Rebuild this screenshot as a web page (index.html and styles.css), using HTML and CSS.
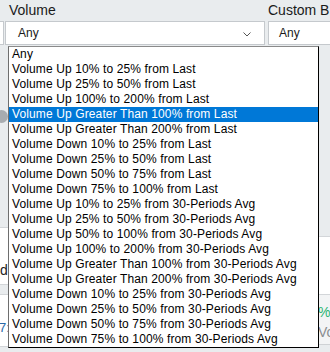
FILE: index.html
```html
<!DOCTYPE html>
<html>
<head>
<meta charset="utf-8">
<link rel="stylesheet" href="styles.css">
</head>
<body>
<div class="page">
  <div class="filters">
    <div class="stub">
      <div class="label">&nbsp;</div>
      <div class="stub-box"></div>
    </div>
    <div class="field vol">
      <div class="label">Volume</div>
      <div class="select">
        <span>Any</span>
        <svg class="chev" width="8" height="5" viewBox="0 0 8 5"><path d="M0.5 0.5 L4 4 L7.5 0.5" fill="none" stroke="#555" stroke-width="1"/></svg>
      </div>
    </div>
    <div class="field custom">
      <div class="label">Custom B</div>
      <div class="select"><span>Any</span></div>
    </div>
  </div>
  <div class="below">
    <div class="left-strip">
      <div class="knob"></div>
      <div class="lcard"><span class="ltext">d</span></div>
      <div class="lrow"><span class="lnum">7:</span></div>
    </div>
    <div class="right-strip">
      <div class="rcard"></div>
      <div class="rrow">
        <span class="pct">%</span>
        <span class="vo">Vo</span>
      </div>
    </div>
  </div>

  <div class="dropdown">
    <div class="opt">Any</div>
    <div class="opt">Volume Up 10% to 25% from Last</div>
    <div class="opt">Volume Up 25% to 50% from Last</div>
    <div class="opt">Volume Up 100% to 200% from Last</div>
    <div class="opt sel">Volume Up Greater Than 100% from Last</div>
    <div class="opt">Volume Up Greater Than 200% from Last</div>
    <div class="opt">Volume Down 10% to 25% from Last</div>
    <div class="opt">Volume Down 25% to 50% from Last</div>
    <div class="opt">Volume Down 50% to 75% from Last</div>
    <div class="opt">Volume Down 75% to 100% from Last</div>
    <div class="opt">Volume Up 10% to 25% from 30-Periods Avg</div>
    <div class="opt">Volume Up 25% to 50% from 30-Periods Avg</div>
    <div class="opt">Volume Up 50% to 100% from 30-Periods Avg</div>
    <div class="opt">Volume Up 100% to 200% from 30-Periods Avg</div>
    <div class="opt">Volume Up Greater Than 100% from 30-Periods Avg</div>
    <div class="opt">Volume Up Greater Than 200% from 30-Periods Avg</div>
    <div class="opt">Volume Down 10% to 25% from 30-Periods Avg</div>
    <div class="opt">Volume Down 25% to 50% from 30-Periods Avg</div>
    <div class="opt">Volume Down 50% to 75% from 30-Periods Avg</div>
    <div class="opt">Volume Down 75% to 100% from 30-Periods Avg</div>
  </div>
</div>
</body>
</html>
```

FILE: styles.css
```css
html, body {
  margin: 0;
  padding: 0;
}
body {
  background: #e9ecee;
  font-family: "Liberation Sans", Arial, sans-serif;
  color: #111;
  width: 330px;
  height: 352px;
  overflow: hidden;
}
.page {
  position: relative;
  width: 330px;
  height: 352px;
}
.filters {
  display: flex;
  padding-top: 2px;
  white-space: nowrap;
}
.label {
  font-size: 14px;
  line-height: 17px;
  height: 17px;
  margin-bottom: 2px;
  padding-left: 4px;
  color: #1a1a1a;
}
.stub {
  width: 4px;
  flex: none;
}
.stub .label {
  padding-left: 0;
}
.stub-box {
  height: 24px;
  box-sizing: border-box;
  background: #fff;
  border: 1px solid #c5c9cd;
  border-left: none;
}
.field {
  flex: none;
}
.vol {
  width: 260px;
  margin-left: 1px;
}
.custom {
  width: 80px;
  margin-left: 3px;
}
.custom .label {
  padding-left: 0;
}
.select {
  position: relative;
  height: 24px;
  box-sizing: border-box;
  background: #fff;
  border: 1px solid #c5c9cd;
  font-size: 12px;
  line-height: 22px;
  padding-left: 12px;
  color: #1a1a1a;
}
.custom .select {
  padding-left: 10px;
}
.chev {
  position: absolute;
  right: 13px;
  top: 10px;
}
.below {
  display: flex;
  justify-content: space-between;
}
.left-strip {
  width: 8px;
  display: flex;
  flex-direction: column;
}
.knob {
  width: 13px;
  height: 13px;
  border-radius: 50%;
  background: #a8acb0;
  margin-left: -5px;
  margin-top: 65px;
}
.lcard {
  margin-top: 104px;
  height: 56px;
  background: #fff;
  border-top: 1px solid #d3d6d9;
  border-bottom: 1px solid #d3d6d9;
  font-size: 14px;
  line-height: 14px;
  overflow: hidden;
}
.ltext {
  display: block;
  padding-top: 35px;
  color: #222;
}
.lrow {
  margin-top: 9px;
  height: 51px;
  background: #fff;
  border-top: 1px solid #d3d6d9;
  border-bottom: 1px solid #d3d6d9;
  font-size: 13px;
  overflow: hidden;
}
.lnum {
  display: block;
  padding-top: 26px;
  margin-left: -1px;
  color: #2b6aa8;
  line-height: 13px;
}
.right-strip {
  width: 12px;
  display: flex;
  flex-direction: column;
}
.rcard {
  margin-top: 191px;
  height: 57px;
  background: #fff;
  border-top: 1px solid #d3d6d9;
}
.rrow {
  height: 51px;
  background: #f3f4f5;
  border-top: 1px solid #d3d6d9;
  border-bottom: 1px solid #cfd2d5;
  font-size: 14px;
  line-height: 18px;
  overflow: hidden;
  white-space: nowrap;
  padding-top: 8px;
  box-sizing: border-box;
}
.pct {
  display: block;
  color: #2bb573;
}
.vo {
  display: block;
  color: #8a8d90;
  margin-top: 2px;
}
.dropdown {
  position: absolute;
  left: 8px;
  top: 46px;
  width: 309px;
  background: #fff;
  border: 1px solid #000;
  border-top-color: #8a8a8a;
  border-left-color: #6e6e6e;
  font-size: 12px;
  letter-spacing: 0.12px;
  color: #000;
}
.opt {
  height: 15px;
  line-height: 15px;
  padding-left: 3px;
  white-space: nowrap;
}
.opt.sel {
  background: #0078d7;
  color: #fff;
}
```
